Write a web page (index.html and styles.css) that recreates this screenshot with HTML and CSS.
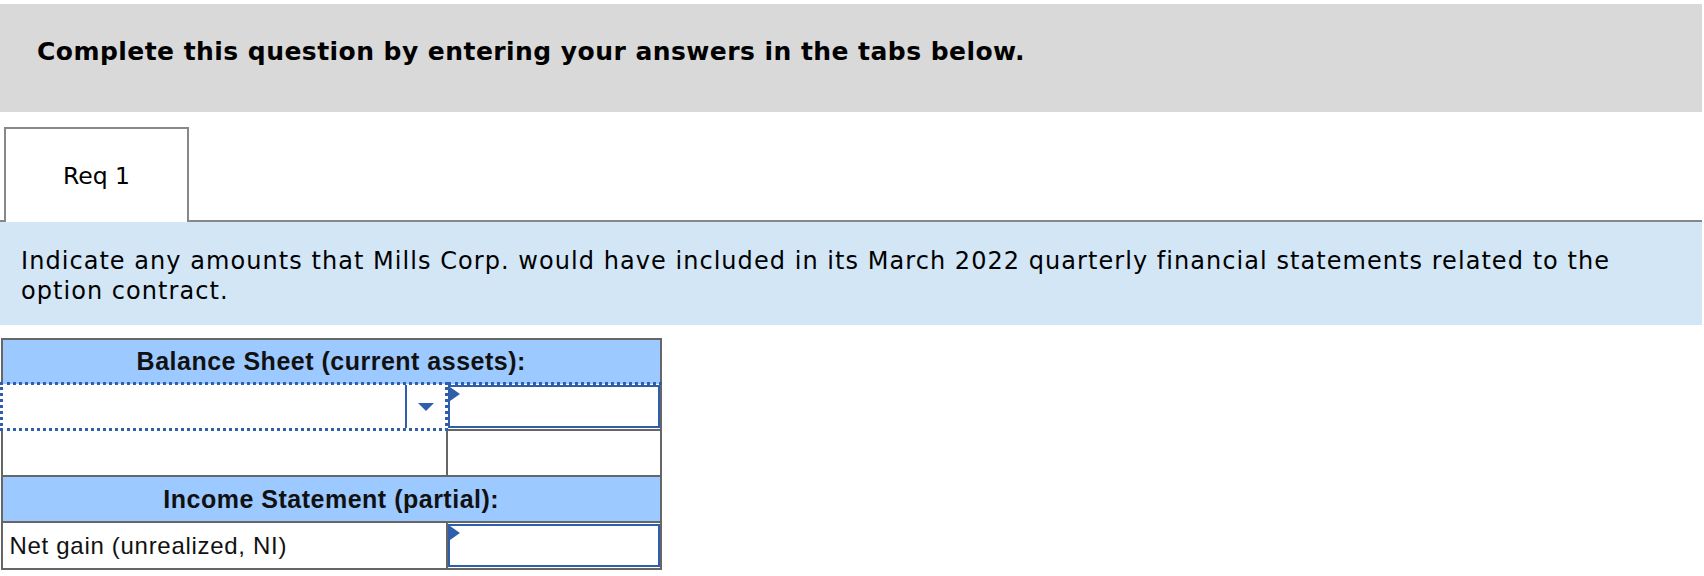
FILE: index.html
```html
<!DOCTYPE html>
<html lang="en">
<head>
    <meta charset="UTF-8">
    <meta name="viewport" content="width=device-width, initial-scale=1.0">
    <title>Req 1</title>
    <link rel="stylesheet" href="styles.css">
</head>
<body>
    <div class="page">
        <div class="banner">Complete this question by entering your answers in the tabs below.</div>

        <div class="tabs">
            <div class="tab">Req 1</div>
        </div>

        <div class="prompt">Indicate any amounts that Mills Corp. would have included in its March 2022 quarterly financial statements related to the option contract.</div>

        <table class="sheet">
            <tr>
                <th colspan="2">Balance Sheet (current assets):</th>
            </tr>
            <tr class="pick-row">
                <td class="label pick">
                    <div class="select">
                        <div class="select-value"></div>
                        <div class="select-arrow"><span class="caret"></span></div>
                    </div>
                </td>
                <td class="amount"><div class="entry"></div></td>
            </tr>
            <tr class="blank-row">
                <td class="label"></td>
                <td class="amount"></td>
            </tr>
            <tr>
                <th colspan="2" class="second">Income Statement (partial):</th>
            </tr>
            <tr class="line-row">
                <td class="label text">Net gain (unrealized, NI)</td>
                <td class="amount"><div class="entry"></div></td>
            </tr>
        </table>
    </div>
</body>
</html>
```

FILE: styles.css
```css
body {
    margin: 0;
    font-family: "DejaVu Sans", Verdana, sans-serif;
    color: #000;
}
.page {
    padding: 4px 2px 0 0;
}
.banner {
    display: flex;
    align-items: center;
    box-sizing: border-box;
    height: 108px;
    padding-left: 37px;
    padding-bottom: 13px;
    background-color: #d9d9d9;
    font-size: 25px;
    font-weight: bold;
    letter-spacing: 0.45px;
}
.tabs {
    display: flex;
    margin-top: 15px;
    padding-left: 4px;
    border-bottom: 2px solid #888;
}
.tab {
    display: flex;
    align-items: center;
    justify-content: center;
    box-sizing: border-box;
    width: 185px;
    height: 95px;
    margin-bottom: -2px;
    border: 2px solid #888;
    border-bottom: none;
    background-color: #fff;
    font-size: 23.5px;
}
.prompt {
    padding: 24px 20px 19px 21px;
    background-color: #d2e6f6;
    font-size: 24px;
    line-height: 30px;
    letter-spacing: 1.05px;
}
.sheet {
    margin-top: 13px;
    width: 662px;
    border-collapse: collapse;
    font-family: "Liberation Sans", Arial, sans-serif;
    font-size: 24px;
    color: #111;
}
.sheet th, .sheet td {
    padding: 0;
    border: 2px solid #666;
}
.sheet th {
    height: 42px;
    background-color: #9cc9ff;
    font-size: 25px;
    font-weight: bold;
    letter-spacing: 0.5px;
    text-align: center;
}
.sheet th.second {
    height: 44px;
}
.sheet .label {
    width: 436px;
}
.pick-row td {
    height: 43px;
    border-top: 3px dotted #2f5faa;
}
.sheet .pick {
    border-left: 3px dotted #2f5faa;
    border-right: 3px dotted #2f5faa;
    border-bottom: 3px dotted #2f5faa;
}
.select {
    display: flex;
    height: 43px;
}
.select-value {
    flex: 1;
}
.select-arrow {
    display: flex;
    align-items: center;
    justify-content: center;
    width: 38px;
    border-left: 2px solid #2f5faa;
}
.caret {
    width: 0;
    height: 0;
    border-left: 8px solid transparent;
    border-right: 8px solid transparent;
    border-top: 8px solid #2f5faa;
}
.blank-row td {
    height: 44px;
}
.line-row td {
    height: 45px;
}
.sheet .text {
    padding-left: 7px;
    letter-spacing: 0.7px;
}
.entry {
    position: relative;
    box-sizing: border-box;
    height: 43px;
    border: 2px solid #2f5faa;
    background-color: #fff;
}
.entry::before {
    content: "";
    position: absolute;
    top: 0;
    left: 0;
    border-left: 10px solid #2f5faa;
    border-top: 7px solid transparent;
    border-bottom: 7px solid transparent;
}
```
